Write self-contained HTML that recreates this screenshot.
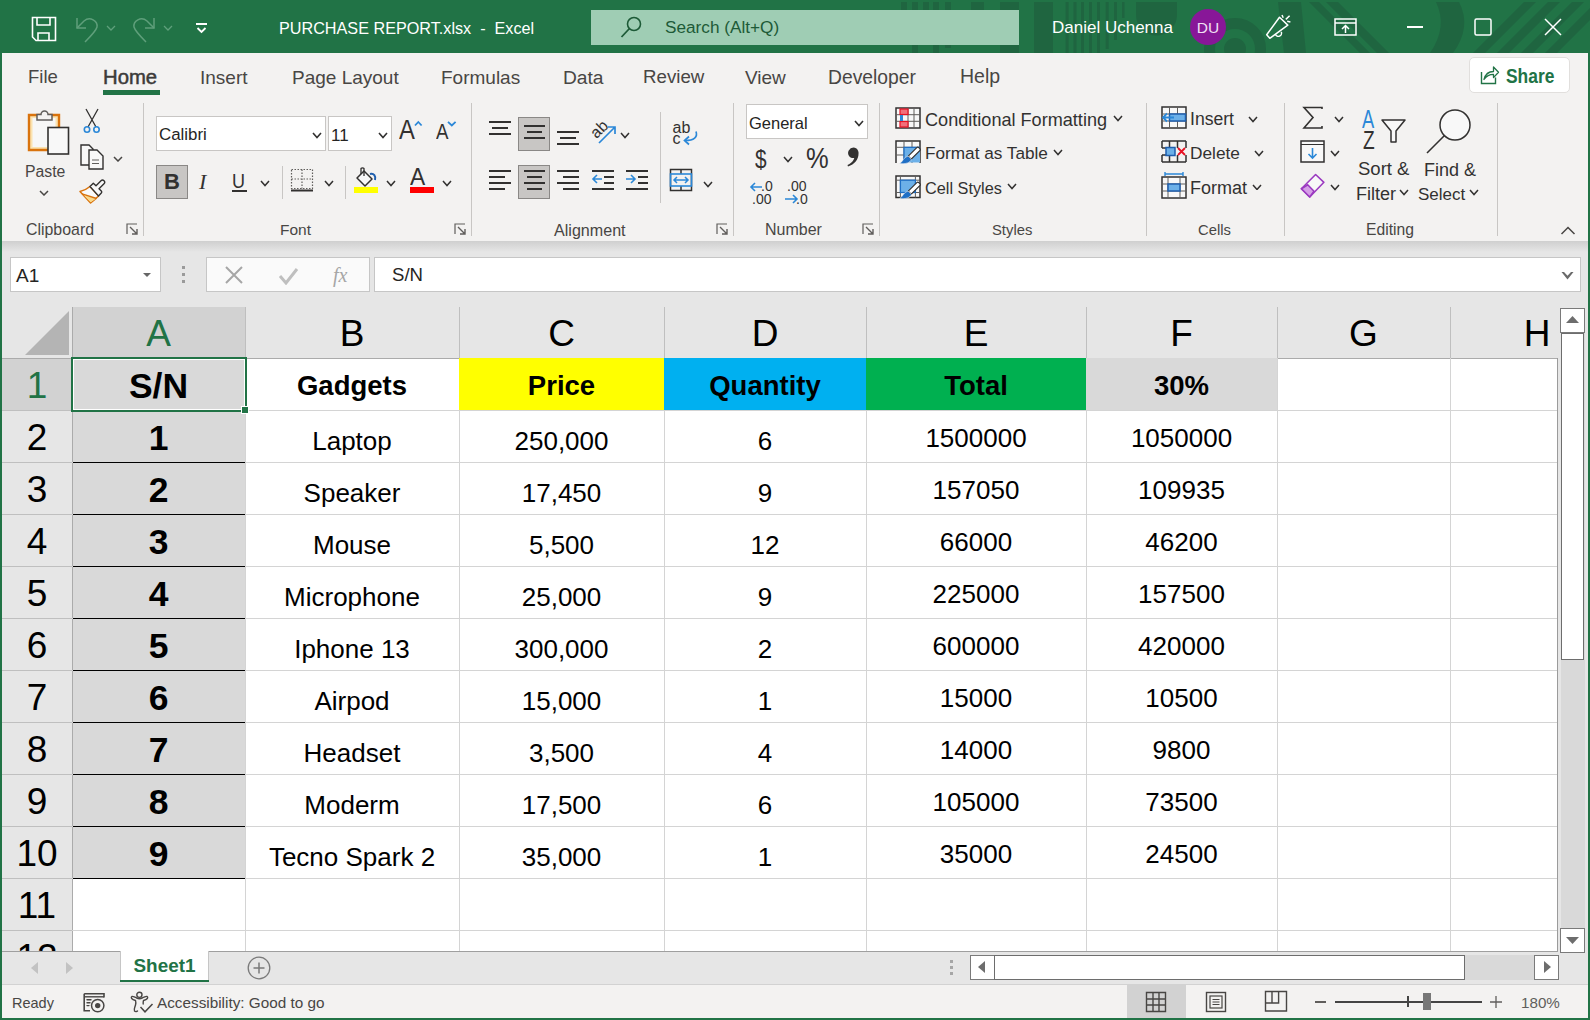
<!DOCTYPE html><html><head><meta charset="utf-8"><style>
html,body{margin:0;padding:0;}
body{width:1590px;height:1020px;overflow:hidden;position:relative;background:#217346;font-family:"Liberation Sans", sans-serif;}
.t{position:absolute;white-space:nowrap;line-height:1;}
.r{position:absolute;display:block;}
</style></head><body>
<svg class="r" style="left:880px;top:2px;" width="140" height="51" viewBox="0 0 140 51"><g transform="translate(0,-2)">
<rect x="21" y="2" width="6" height="10" fill="#1f6540"/>
<rect x="32" y="2" width="6" height="51" fill="#1f6540"/>
<rect x="43" y="2" width="6" height="10" fill="#1f6540"/>
<rect x="53" y="2" width="6" height="51" fill="#1f6540"/>
<rect x="65" y="2" width="6" height="46" fill="#1f6540"/>
<rect x="91" y="2" width="13" height="10" fill="#1f6540"/>
<rect x="120" y="2" width="19" height="51" fill="#1f6540"/>
</g></svg>
<svg class="r" style="left:1020px;top:2px;" width="570" height="51" viewBox="0 0 570 51"><g transform="translate(0,-2)">
<rect x="14" y="2" width="19" height="51" fill="#1f6540"/>
<rect x="45.6" y="2" width="3" height="51" fill="#1f6540"/>
<rect x="53.5" y="2" width="3" height="51" fill="#1f6540"/>
<rect x="61" y="2" width="3" height="51" fill="#1f6540"/>
<rect x="69" y="2" width="3" height="51" fill="#1f6540"/>
<rect x="77" y="2" width="3" height="51" fill="#1f6540"/>
<rect x="85.7" y="2" width="3" height="47" fill="#1f6540"/>
<rect x="94" y="2" width="3" height="38" fill="#1f6540"/>
<rect x="102" y="2" width="2.5" height="16" fill="#1f6540"/>
<path d="M116 2 H157 V15 A20.5 20.5 0 0 1 116 15 Z" fill="#1f6540"/>
<circle cx="215" cy="49" r="25.5" fill="none" stroke="#1f6540" stroke-width="11"/>
<circle cx="215" cy="49" r="11" fill="#1f6540"/>
<path d="M258 2 H281 L286 53 H264 Z" fill="#1f6540"/>
<path d="M289 2 H299 L350 53 H340 Z" fill="#1f6540"/>
<path d="M306 2 H318 L369 53 H357 Z" fill="#1f6540"/>
<path d="M416 2 H439 Q452 27 433 53 H410 Q428 27 416 2 Z" fill="#1f6540"/>
<path d="M453 53 H465 L516 2 H504 Z" fill="#1f6540"/>
<path d="M477 53 H489 L540 2 H528 Z" fill="#1f6540"/>
<path d="M501 53 H513 L564 2 H552 Z" fill="#1f6540"/>
<path d="M525 53 H537 L570 20 V8 Z" fill="#1f6540"/>
</g></svg>
<svg class="r" style="left:31px;top:16px;" width="27" height="27" viewBox="0 0 27 27"><path d="M1.5 1.5 H24.5 V24.5 H5 L1.5 21 Z" fill="none" stroke="#fff" stroke-width="1.6"/>
<path d="M6 1.5 V9 H19 V1.5" fill="none" stroke="#fff" stroke-width="1.6"/>
<path d="M7 24.5 V17 H18 V24.5" fill="none" stroke="#fff" stroke-width="1.6"/></svg>
<svg class="r" style="left:74px;top:15px;" width="26" height="28" viewBox="0 0 26 28"><path d="M3 3 V13 H12" fill="none" stroke="#5f9f7b" stroke-width="1.5"/><path d="M3 13 L10 6 C16 1 24 6 23 12 C22 16 17 21 11 27" fill="none" stroke="#5f9f7b" stroke-width="1.5"/></svg>
<svg class="r" style="left:106px;top:25px;" width="10" height="6" viewBox="0 0 10 6"><path d="M1 1 L5.0 5 L9 1" fill="none" stroke="#5f9f7b" stroke-width="1.3"/></svg>
<svg class="r" style="left:131px;top:15px;" width="26" height="28" viewBox="0 0 26 28"><path d="M23 3 V13 H14" fill="none" stroke="#5f9f7b" stroke-width="1.5"/><path d="M23 13 L16 6 C10 1 2 6 3 12 C4 16 9 21 15 27" fill="none" stroke="#5f9f7b" stroke-width="1.5"/></svg>
<svg class="r" style="left:163px;top:25px;" width="10" height="6" viewBox="0 0 10 6"><path d="M1 1 L5.0 5 L9 1" fill="none" stroke="#5f9f7b" stroke-width="1.3"/></svg>
<svg class="r" style="left:195px;top:21px;" width="14" height="14" viewBox="0 0 14 14"><rect x="1" y="2" width="11" height="2" fill="#fff"/><path d="M2.5 7 L6.5 11 L10.5 7" fill="none" stroke="#fff" stroke-width="1.8"/></svg>
<div class="t" style="left:279px;top:20.08px;font-size:16.2px;color:#fff;font-weight:400;">PURCHASE REPORT.xlsx&nbsp; -&nbsp; Excel</div>
<div class="r" style="left:591px;top:10px;width:428px;height:35px;background:#9fcdb4;"></div>
<svg class="r" style="left:619px;top:15px;" width="26" height="26" viewBox="0 0 26 26"><circle cx="15" cy="9" r="6.5" fill="none" stroke="#1d5a37" stroke-width="1.6"/><path d="M10.5 13.5 L2.5 22" stroke="#1d5a37" stroke-width="1.8"/></svg>
<div class="t" style="left:665px;top:18.93px;font-size:17.2px;color:#1d5a37;font-weight:400;">Search (Alt+Q)</div>
<div class="t" style="left:1052px;top:19.10px;font-size:17px;color:#fff;font-weight:400;">Daniel Uchenna</div>
<svg class="r" style="left:1190px;top:9px;" width="36" height="36" viewBox="0 0 36 36"><circle cx="18" cy="18" r="18" fill="#881798"/></svg>
<div class="t" style="left:808px;width:800px;text-align:center;top:19.87px;font-size:15.5px;color:#f0e0f4;font-weight:400;">DU</div>
<svg class="r" style="left:1264px;top:13px;" width="30" height="28" viewBox="0 0 30 28"><path d="M2.7 21.8 L5.8 25.3 L23.8 12.1 L15.5 4.2 Z" fill="none" stroke="#fff" stroke-width="1.5" stroke-linejoin="round"/>
<path d="M11.3 21.3 A3.2 3.2 0 0 0 17.3 18.9" fill="none" stroke="#fff" stroke-width="1.5"/>
<path d="M18 2 L19.2 4.8 M21.8 6.4 L25.6 2.8 M23.2 8.3 L26.4 9" stroke="#fff" stroke-width="1.5"/></svg>
<svg class="r" style="left:1334px;top:18px;" width="24" height="19" viewBox="0 0 24 19"><rect x="1" y="1" width="21" height="16" fill="none" stroke="#fff" stroke-width="1.5"/><path d="M1 5 H22" stroke="#fff" stroke-width="1.5"/><path d="M11.5 15 V8 M8 11 L11.5 7.5 L15 11" fill="none" stroke="#fff" stroke-width="1.5"/></svg>
<div class="r" style="left:1407px;top:26px;width:16px;height:1.5px;background:#fff;"></div>
<svg class="r" style="left:1474px;top:18px;" width="20" height="19" viewBox="0 0 20 19"><rect x="1" y="1" width="16" height="16" rx="1.5" fill="none" stroke="#fff" stroke-width="1.5"/></svg>
<svg class="r" style="left:1543px;top:17px;" width="20" height="20" viewBox="0 0 20 20"><path d="M2 2 L18 18 M18 2 L2 18" stroke="#fff" stroke-width="1.5"/></svg>
<div class="r" style="left:2px;top:53px;width:1586px;height:188px;background:#f3f2f1;"></div>
<div class="t" style="left:28px;top:68.33px;font-size:18.5px;color:#484644;font-weight:400;">File</div>
<div class="t" style="left:103px;top:66.81px;font-size:20.3px;color:#3b3a39;font-weight:400;-webkit-text-stroke:0.5px #3b3a39;">Home</div>
<div class="t" style="left:200px;top:67.91px;font-size:19px;color:#484644;font-weight:400;">Insert</div>
<div class="t" style="left:292px;top:67.91px;font-size:19px;color:#484644;font-weight:400;">Page Layout</div>
<div class="t" style="left:441px;top:67.91px;font-size:19px;color:#484644;font-weight:400;">Formulas</div>
<div class="t" style="left:563px;top:67.74px;font-size:19.2px;color:#484644;font-weight:400;">Data</div>
<div class="t" style="left:643px;top:68.16px;font-size:18.7px;color:#484644;font-weight:400;">Review</div>
<div class="t" style="left:745px;top:67.91px;font-size:19px;color:#484644;font-weight:400;">View</div>
<div class="t" style="left:828px;top:67.65px;font-size:19.3px;color:#484644;font-weight:400;">Developer</div>
<div class="t" style="left:960px;top:67.48px;font-size:19.5px;color:#484644;font-weight:400;">Help</div>
<div class="r" style="left:103px;top:90px;width:57px;height:5px;background:#217346;"></div>
<div class="r" style="left:1469px;top:57px;width:101px;height:36px;background:#fff;border:1px solid #e1dfdd;border-radius:5px;box-sizing:border-box;"></div>
<svg class="r" style="left:1479px;top:64px;" width="22" height="22" viewBox="0 0 22 22"><path d="M2.5 8 V19.5 H16.5 V13.5" fill="none" stroke="#217346" stroke-width="1.4"/><path d="M5 15.5 C6.5 9.5 11 7.5 14.5 7.5 V3 L19.5 8.3 L14.5 13.6 V10.3 C10.5 10.3 7.5 11.8 5 15.5 Z" fill="none" stroke="#217346" stroke-width="1.3" stroke-linejoin="round"/></svg>
<div class="t" style="left:1505.5px;top:67.23px;font-size:19.8px;color:#217346;font-weight:700;transform:scaleX(0.88);transform-origin:left;">Share</div>
<div class="r" style="left:143px;top:103px;width:1px;height:133px;background:#c8c6c4;"></div>
<div class="r" style="left:471px;top:103px;width:1px;height:133px;background:#c8c6c4;"></div>
<div class="r" style="left:733px;top:103px;width:1px;height:133px;background:#c8c6c4;"></div>
<div class="r" style="left:879px;top:103px;width:1px;height:133px;background:#c8c6c4;"></div>
<div class="r" style="left:1146px;top:103px;width:1px;height:133px;background:#c8c6c4;"></div>
<div class="r" style="left:1284px;top:103px;width:1px;height:133px;background:#c8c6c4;"></div>
<div class="r" style="left:1497px;top:103px;width:1px;height:133px;background:#c8c6c4;"></div>
<div class="t" style="left:26px;top:222.13px;font-size:15.9px;color:#484644;font-weight:400;">Clipboard</div>
<div class="t" style="left:280px;top:222.47px;font-size:15.5px;color:#484644;font-weight:400;">Font</div>
<div class="t" style="left:554px;top:221.96px;font-size:16.1px;color:#484644;font-weight:400;">Alignment</div>
<div class="t" style="left:765px;top:222.05px;font-size:16px;color:#484644;font-weight:400;">Number</div>
<div class="t" style="left:992px;top:223.06px;font-size:14.8px;color:#484644;font-weight:400;">Styles</div>
<div class="t" style="left:1198px;top:223.06px;font-size:14.8px;color:#484644;font-weight:400;">Cells</div>
<div class="t" style="left:1366px;top:222.30px;font-size:15.7px;color:#484644;font-weight:400;">Editing</div>
<svg class="r" style="left:126px;top:223px;" width="13" height="13" viewBox="0 0 13 13"><path d="M1 11 V1 H11" fill="none" stroke="#605e5c" stroke-width="1.2"/><path d="M4 4 L11 11 M6 11 H11 V6" fill="none" stroke="#605e5c" stroke-width="1.4"/></svg>
<svg class="r" style="left:454px;top:223px;" width="13" height="13" viewBox="0 0 13 13"><path d="M1 11 V1 H11" fill="none" stroke="#605e5c" stroke-width="1.2"/><path d="M4 4 L11 11 M6 11 H11 V6" fill="none" stroke="#605e5c" stroke-width="1.4"/></svg>
<svg class="r" style="left:716px;top:223px;" width="13" height="13" viewBox="0 0 13 13"><path d="M1 11 V1 H11" fill="none" stroke="#605e5c" stroke-width="1.2"/><path d="M4 4 L11 11 M6 11 H11 V6" fill="none" stroke="#605e5c" stroke-width="1.4"/></svg>
<svg class="r" style="left:862px;top:223px;" width="13" height="13" viewBox="0 0 13 13"><path d="M1 11 V1 H11" fill="none" stroke="#605e5c" stroke-width="1.2"/><path d="M4 4 L11 11 M6 11 H11 V6" fill="none" stroke="#605e5c" stroke-width="1.4"/></svg>
<svg class="r" style="left:1560px;top:225px;" width="16" height="11" viewBox="0 0 16 11"><path d="M1.5 9 L8 2.5 L14.5 9" fill="none" stroke="#484644" stroke-width="1.5"/></svg>
<svg class="r" style="left:27px;top:107px;" width="44" height="50" viewBox="0 0 44 50"><path d="M2 8 H32 V43 H2 Z" fill="#fbe3b0" stroke="#d9730d" stroke-width="2.4"/>
<rect x="5.5" y="11" width="23" height="29" fill="#f7f7f7"/>
<path d="M10 13 V7.5 H14 A3.5 3.5 0 0 1 21 7.5 H25 V13 Z" fill="#f3f2f1" stroke="#605e5c" stroke-width="1.5"/>
<rect x="21" y="20.5" width="20.5" height="26.5" fill="#f8f8f8" stroke="#323130" stroke-width="1.6"/></svg>
<div class="t" style="left:25px;top:163.62px;font-size:15.8px;color:#484644;font-weight:400;">Paste</div>
<svg class="r" style="left:39px;top:190px;" width="10" height="6" viewBox="0 0 10 6"><path d="M1 1 L5.0 5 L9 1" fill="none" stroke="#484644" stroke-width="1.5"/></svg>
<svg class="r" style="left:82px;top:108px;" width="20" height="27" viewBox="0 0 20 27"><path d="M4 1 L14 19 M16 1 L6 19" stroke="#323130" stroke-width="1.3"/>
<circle cx="5" cy="21.5" r="2.7" fill="none" stroke="#2b88d8" stroke-width="1.6"/>
<circle cx="14.5" cy="21.5" r="2.7" fill="none" stroke="#2b88d8" stroke-width="1.6"/></svg>
<svg class="r" style="left:79px;top:144px;" width="27" height="27" viewBox="0 0 27 27"><path d="M2 1 H10 L14 5 V21 H2 Z" fill="#f8f8f8" stroke="#323130" stroke-width="1.4"/>
<path d="M10 6 H18 L24 12 V25 H10 Z" fill="#f8f8f8" stroke="#323130" stroke-width="1.4"/>
<path d="M13 16 H20 M13 19.5 H20" stroke="#605e5c" stroke-width="1.2"/></svg>
<svg class="r" style="left:113px;top:156px;" width="10" height="6" viewBox="0 0 10 6"><path d="M1 1 L5.0 5 L9 1" fill="none" stroke="#484644" stroke-width="1.5"/></svg>
<svg class="r" style="left:74px;top:174px;" width="34" height="34" viewBox="0 0 34 34"><path d="M16 12.5 Q12 16 6 17.4 L16.6 29 Q21 25.5 24.5 21.9 Z" fill="#fafafa" stroke="#d9730d" stroke-width="1.5" stroke-linejoin="round"/>
<path d="M9.5 21 L22 24.7 L16.6 28.3 Z" fill="#f8d98a"/>
<path d="M8 19.8 L22.5 24.5" stroke="#d9730d" stroke-width="1.4"/>
<path d="M16 12.5 L19.3 9.2 L22 11.8 L27 6.8 Q28.5 5.3 30 6.8 Q31.5 8.3 30 9.8 L25 14.8 L27.3 17.1 Q28.3 18.1 27.3 19.1 L24.5 21.9 Z" fill="#f8f8f8" stroke="#323130" stroke-width="1.4" stroke-linejoin="round"/></svg>
<div class="r" style="left:156px;top:116px;width:170px;height:35px;background:#fff;border:1px solid #c8c6c4;box-sizing:border-box;"></div>
<div class="t" style="left:159px;top:126.69px;font-size:16.9px;color:#252423;font-weight:400;">Calibri</div>
<svg class="r" style="left:312px;top:132px;" width="10" height="6.5" viewBox="0 0 10 6.5"><path d="M1 1 L5.0 5.5 L9 1" fill="none" stroke="#323130" stroke-width="1.6"/></svg>
<div class="r" style="left:328px;top:116px;width:64px;height:35px;background:#fff;border:1px solid #c8c6c4;box-sizing:border-box;"></div>
<div class="t" style="left:331px;top:126.60px;font-size:17px;color:#252423;font-weight:400;">11</div>
<svg class="r" style="left:378px;top:132px;" width="10" height="6.5" viewBox="0 0 10 6.5"><path d="M1 1 L5.0 5.5 L9 1" fill="none" stroke="#323130" stroke-width="1.6"/></svg>
<div class="t" style="left:399px;top:116.28px;font-size:28px;color:#323130;font-weight:400;transform:scaleX(0.85);transform-origin:left;">A</div>
<svg class="r" style="left:414px;top:120px;" width="9" height="7" viewBox="0 0 9 7"><path d="M1 5.5 L4.3 2 L7.6 5.5" fill="none" stroke="#2b88d8" stroke-width="1.8"/></svg>
<div class="t" style="left:436px;top:121.37px;font-size:22px;color:#323130;font-weight:400;transform:scaleX(0.85);transform-origin:left;">A</div>
<svg class="r" style="left:447px;top:120px;" width="10" height="7" viewBox="0 0 10 7"><path d="M1 1.8 L4.8 5.5 L8.6 1.8" fill="none" stroke="#2b88d8" stroke-width="1.8"/></svg>
<div class="r" style="left:156px;top:165px;width:32px;height:34px;background:#c8c6c4;border:1px solid #8a8886;box-sizing:border-box;"></div>
<div class="t" style="left:164px;top:171.37px;font-size:22px;color:#323130;font-weight:700;">B</div>
<div class="t" style="left:199px;top:171.37px;font-size:22px;color:#323130;font-weight:400;font-family:'Liberation Serif',serif;font-style:italic;">I</div>
<div class="t" style="left:232px;top:171.06px;font-size:20px;color:#323130;font-weight:400;transform:scaleX(0.9);transform-origin:left;">U</div>
<div class="r" style="left:232px;top:190px;width:15px;height:1.5px;background:#323130;"></div>
<svg class="r" style="left:260px;top:180px;" width="10" height="6.5" viewBox="0 0 10 6.5"><path d="M1 1 L5.0 5.5 L9 1" fill="none" stroke="#323130" stroke-width="1.5"/></svg>
<div class="r" style="left:282px;top:166px;width:1px;height:33px;background:#c8c6c4;"></div>
<svg class="r" style="left:290px;top:168px;" width="24" height="25" viewBox="0 0 24 25"><path d="M1.5 1.5 H22.5 V20.5 H1.5 Z M12 1.5 V20.5 M1.5 11 H22.5" fill="none" stroke="#605e5c" stroke-width="1.2" stroke-dasharray="1.5 1.5"/>
<path d="M1 22.5 H23" stroke="#323130" stroke-width="2"/></svg>
<svg class="r" style="left:324px;top:180px;" width="10" height="6.5" viewBox="0 0 10 6.5"><path d="M1 1 L5.0 5.5 L9 1" fill="none" stroke="#323130" stroke-width="1.5"/></svg>
<div class="r" style="left:345px;top:166px;width:1px;height:33px;background:#c8c6c4;"></div>
<svg class="r" style="left:353px;top:167px;" width="27" height="28" viewBox="0 0 27 28"><path d="M4 11 L11 4 L19 12 L12 19 Z" fill="#f8f8f8" stroke="#323130" stroke-width="1.5" stroke-linejoin="round"/>
<path d="M8 7 V1.5 A2 2 0 0 1 11 1.5 V9" fill="none" stroke="#323130" stroke-width="1.3"/>
<path d="M17 7 C21 6 23 9 22 13" fill="none" stroke="#1f5fae" stroke-width="2"/>
<rect x="1" y="20" width="24" height="6" fill="#ffff00"/></svg>
<svg class="r" style="left:386px;top:180px;" width="10" height="6.5" viewBox="0 0 10 6.5"><path d="M1 1 L5.0 5.5 L9 1" fill="none" stroke="#323130" stroke-width="1.5"/></svg>
<div class="t" style="left:410px;top:164.67px;font-size:24px;color:#323130;font-weight:400;transform:scaleX(0.95);transform-origin:left;">A</div>
<div class="r" style="left:410px;top:187px;width:24px;height:6px;background:#ff0000;"></div>
<svg class="r" style="left:442px;top:180px;" width="10" height="6.5" viewBox="0 0 10 6.5"><path d="M1 1 L5.0 5.5 L9 1" fill="none" stroke="#323130" stroke-width="1.5"/></svg>
<div class="r" style="left:489px;top:121px;width:22px;height:1.6px;background:#323130;"></div>
<div class="r" style="left:492px;top:127px;width:16px;height:1.6px;background:#323130;"></div>
<div class="r" style="left:489px;top:133px;width:22px;height:1.6px;background:#323130;"></div>
<div class="r" style="left:518px;top:117px;width:32px;height:34px;background:#c8c6c4;border:1px solid #8a8886;box-sizing:border-box;"></div>
<div class="r" style="left:524px;top:125px;width:21px;height:1.6px;background:#323130;"></div>
<div class="r" style="left:527px;top:131px;width:15px;height:1.6px;background:#323130;"></div>
<div class="r" style="left:524px;top:137px;width:21px;height:1.6px;background:#323130;"></div>
<div class="r" style="left:557px;top:131px;width:22px;height:1.6px;background:#323130;"></div>
<div class="r" style="left:560px;top:137px;width:16px;height:1.6px;background:#323130;"></div>
<div class="r" style="left:557px;top:143px;width:22px;height:1.6px;background:#323130;"></div>
<svg class="r" style="left:587px;top:117px;" width="32" height="30" viewBox="0 0 32 30"><text x="12" y="17.5" text-anchor="middle" font-family="Liberation Sans" font-size="16" fill="#323130" transform="rotate(-45 12 12)">ab</text>
<path d="M12 26 L28 10 M21 10 H28 V17" fill="none" stroke="#2b88d8" stroke-width="1.7"/></svg>
<svg class="r" style="left:620px;top:132px;" width="10" height="6.5" viewBox="0 0 10 6.5"><path d="M1 1 L5.0 5.5 L9 1" fill="none" stroke="#323130" stroke-width="1.5"/></svg>
<div class="r" style="left:489px;top:170px;width:22px;height:1.6px;background:#323130;"></div>
<div class="r" style="left:489px;top:176px;width:16px;height:1.6px;background:#323130;"></div>
<div class="r" style="left:489px;top:182px;width:22px;height:1.6px;background:#323130;"></div>
<div class="r" style="left:489px;top:188px;width:16px;height:1.6px;background:#323130;"></div>
<div class="r" style="left:518px;top:165px;width:32px;height:34px;background:#c8c6c4;border:1px solid #8a8886;box-sizing:border-box;"></div>
<div class="r" style="left:524px;top:170px;width:21px;height:1.6px;background:#323130;"></div>
<div class="r" style="left:527px;top:176px;width:15px;height:1.6px;background:#323130;"></div>
<div class="r" style="left:524px;top:182px;width:21px;height:1.6px;background:#323130;"></div>
<div class="r" style="left:527px;top:188px;width:15px;height:1.6px;background:#323130;"></div>
<div class="r" style="left:557px;top:170px;width:22px;height:1.6px;background:#323130;"></div>
<div class="r" style="left:563px;top:176px;width:16px;height:1.6px;background:#323130;"></div>
<div class="r" style="left:557px;top:182px;width:22px;height:1.6px;background:#323130;"></div>
<div class="r" style="left:563px;top:188px;width:16px;height:1.6px;background:#323130;"></div>
<div class="r" style="left:592px;top:170px;width:22px;height:1.6px;background:#323130;"></div>
<div class="r" style="left:592px;top:188px;width:22px;height:1.6px;background:#323130;"></div>
<div class="r" style="left:604px;top:176px;width:10px;height:1.6px;background:#323130;"></div>
<div class="r" style="left:604px;top:182px;width:10px;height:1.6px;background:#323130;"></div>
<svg class="r" style="left:591px;top:173px;" width="12" height="12" viewBox="0 0 12 12"><path d="M11 6 H2 M6 2 L2 6 L6 10" fill="none" stroke="#2b88d8" stroke-width="1.6"/></svg>
<div class="r" style="left:626px;top:170px;width:22px;height:1.6px;background:#323130;"></div>
<div class="r" style="left:626px;top:188px;width:22px;height:1.6px;background:#323130;"></div>
<div class="r" style="left:638px;top:176px;width:10px;height:1.6px;background:#323130;"></div>
<div class="r" style="left:638px;top:182px;width:10px;height:1.6px;background:#323130;"></div>
<svg class="r" style="left:625px;top:173px;" width="12" height="12" viewBox="0 0 12 12"><path d="M1 6 H10 M6 2 L10 6 L6 10" fill="none" stroke="#2b88d8" stroke-width="1.6"/></svg>
<div class="r" style="left:660px;top:112px;width:1px;height:91px;background:#c8c6c4;"></div>
<svg class="r" style="left:671px;top:118px;" width="28" height="30" viewBox="0 0 28 30"><text x="1.5" y="15" font-family="Liberation Sans" font-size="16" fill="#323130">ab</text>
<text x="1.5" y="25.5" font-family="Liberation Sans" font-size="16" fill="#323130">c</text>
<path d="M25 13.5 C27 19 23 22.5 14 22.5" fill="none" stroke="#2b88d8" stroke-width="1.7"/>
<path d="M18 18.5 L13.5 22.5 L18 26.5" fill="none" stroke="#2b88d8" stroke-width="1.7"/></svg>
<svg class="r" style="left:669px;top:168px;" width="25" height="25" viewBox="0 0 25 25"><rect x="1.5" y="1.5" width="21" height="21" fill="none" stroke="#323130" stroke-width="1.5"/>
<path d="M12 1.5 V6 M12 18 V22.5" stroke="#323130" stroke-width="1.5"/>
<rect x="1.5" y="6" width="21" height="12" fill="none" stroke="#2b88d8" stroke-width="1.6"/>
<path d="M5 12 H19 M8 9 L5 12 L8 15 M16 9 L19 12 L16 15" fill="none" stroke="#2b88d8" stroke-width="1.5"/></svg>
<svg class="r" style="left:703px;top:181px;" width="10" height="6.5" viewBox="0 0 10 6.5"><path d="M1 1 L5.0 5.5 L9 1" fill="none" stroke="#323130" stroke-width="1.5"/></svg>
<div class="r" style="left:746px;top:104px;width:122px;height:35px;background:#fff;border:1px solid #c8c6c4;box-sizing:border-box;"></div>
<div class="t" style="left:749px;top:115.02px;font-size:16.5px;color:#252423;font-weight:400;">General</div>
<svg class="r" style="left:854px;top:120px;" width="10" height="6.5" viewBox="0 0 10 6.5"><path d="M1 1 L5.0 5.5 L9 1" fill="none" stroke="#323130" stroke-width="1.6"/></svg>
<div class="t" style="left:755px;top:145.98px;font-size:26px;color:#323130;font-weight:400;transform:scaleX(0.8);transform-origin:left;">$</div>
<svg class="r" style="left:783px;top:156px;" width="10" height="6.5" viewBox="0 0 10 6.5"><path d="M1 1 L5.0 5.5 L9 1" fill="none" stroke="#323130" stroke-width="1.5"/></svg>
<div class="t" style="left:806px;top:143.09px;font-size:30px;color:#323130;font-weight:400;transform:scaleX(0.85);transform-origin:left;">%</div>
<svg class="r" style="left:845px;top:146px;" width="16" height="22" viewBox="0 0 16 22"><path d="M8.5 1.5 A5.3 5.3 0 1 1 4 10 A5.5 5.5 0 0 1 8.5 1.5 Z M13.5 6.5 C14 13 10 18.5 3 20.5 L2.5 19 C7 17 9.5 14 9.5 10 Z" fill="#323130"/></svg>
<svg class="r" style="left:749px;top:178px;" width="60" height="28" viewBox="0 0 60 28"><path d="M13 9 H2 M6 5 L2 9 L6 13" fill="none" stroke="#2b88d8" stroke-width="1.6"/>
<path d="M48 21 H36 M44 17 L48 21 L44 25" fill="none" stroke="#2b88d8" stroke-width="1.6"/></svg>
<div class="t" style="left:761px;top:179.14px;font-size:14px;color:#323130;font-weight:400;">.0</div>
<div class="t" style="left:752px;top:192.14px;font-size:14px;color:#323130;font-weight:400;">.00</div>
<div class="t" style="left:787px;top:179.14px;font-size:14px;color:#323130;font-weight:400;">.00</div>
<div class="t" style="left:796px;top:192.14px;font-size:14px;color:#323130;font-weight:400;">.0</div>
<svg class="r" style="left:895px;top:107px;" width="26" height="23" viewBox="0 0 26 23"><rect x="1" y="1" width="24" height="20" fill="#f8f8f8" stroke="#323130" stroke-width="1.5"/>
<path d="M7 1 V21 M13 1 V21 M19 1 V21 M1 7.7 H25 M1 14.3 H25" stroke="#605e5c" stroke-width="1"/>
<rect x="5" y="2" width="8" height="5.5" fill="#f1707b" stroke="#e81123" stroke-width="1.2"/>
<rect x="5" y="14.5" width="8" height="5.5" fill="#f1707b" stroke="#e81123" stroke-width="1.2"/>
<rect x="5" y="8" width="3" height="6" fill="#2b88d8"/></svg>
<div class="t" style="left:925px;top:110.67px;font-size:18.1px;color:#323130;font-weight:400;">Conditional Formatting</div>
<svg class="r" style="left:1113px;top:115px;" width="10" height="6.5" viewBox="0 0 10 6.5"><path d="M1 1 L5.0 5.5 L9 1" fill="none" stroke="#323130" stroke-width="1.5"/></svg>
<svg class="r" style="left:895px;top:140px;" width="26" height="25" viewBox="0 0 26 25"><path d="M1 23 V1 H25 V23" fill="#f8f8f8" stroke="#323130" stroke-width="1.5"/>
<path d="M9 1 V23 M17 1 V23 M1 7.3 H25 M1 15 H25" stroke="#605e5c" stroke-width="1"/>
<rect x="9" y="7.3" width="16" height="15.2" fill="#6cb0e8"/>
<path d="M9 22.5 V7.3 H25" fill="none" stroke="#1f6fc5" stroke-width="1.3"/>
<path d="M24.8 8.6 Q25.8 9.6 24.8 10.6 L16.2 19.2 L13.2 16.2 L21.8 7.6 Q22.8 6.6 23.8 7.6 Z" fill="#fff" stroke="#323130" stroke-width="1.2"/>
<path d="M13 16 L16.4 19.4 C15.4 22.6 11 24.2 4.5 23.6 C7.8 22 8.6 17 13 16 Z" fill="#1f6fc5" stroke="#f3f2f1" stroke-width="0.6"/></svg>
<div class="t" style="left:925px;top:145.43px;font-size:17.2px;color:#323130;font-weight:400;">Format as Table</div>
<svg class="r" style="left:1053px;top:149px;" width="10" height="6.5" viewBox="0 0 10 6.5"><path d="M1 1 L5.0 5.5 L9 1" fill="none" stroke="#323130" stroke-width="1.5"/></svg>
<svg class="r" style="left:895px;top:175px;" width="26" height="25" viewBox="0 0 26 25"><rect x="1" y="1" width="24" height="21.5" fill="#f8f8f8" stroke="#323130" stroke-width="1.5"/>
<path d="M5.4 1 V22.5 M20.4 1 V22.5 M1 5.2 H25 M1 17.5 H25" stroke="#605e5c" stroke-width="1"/>
<rect x="5.4" y="5.2" width="15" height="12.3" fill="#6cb0e8" stroke="#1f6fc5" stroke-width="1.3"/>
<path d="M24.8 8.6 Q25.8 9.6 24.8 10.6 L16.2 19.2 L13.2 16.2 L21.8 7.6 Q22.8 6.6 23.8 7.6 Z" fill="#fff" stroke="#323130" stroke-width="1.2"/>
<path d="M13 16 L16.4 19.4 C15.4 22.6 11 24.2 4.5 23.6 C7.8 22 8.6 17 13 16 Z" fill="#1f6fc5" stroke="#f3f2f1" stroke-width="0.6"/></svg>
<div class="t" style="left:925px;top:180.19px;font-size:16.3px;color:#323130;font-weight:400;">Cell Styles</div>
<svg class="r" style="left:1007px;top:183px;" width="10" height="6.5" viewBox="0 0 10 6.5"><path d="M1 1 L5.0 5.5 L9 1" fill="none" stroke="#323130" stroke-width="1.5"/></svg>
<svg class="r" style="left:1161px;top:106px;" width="26" height="24" viewBox="0 0 26 24"><rect x="1" y="1" width="24" height="21" fill="#f8f8f8" stroke="#323130" stroke-width="1.5"/>
<path d="M8.5 1 V22 M16.5 1 V22 M1 8 H25 M1 15 H25" stroke="#605e5c" stroke-width="1"/>
<rect x="8.5" y="8" width="16" height="7" fill="#6cb0e8" stroke="#1f5fae" stroke-width="1.5"/>
<path d="M13 11.5 H2 M6 7.5 L2 11.5 L6 15.5" fill="none" stroke="#2b88d8" stroke-width="1.8"/></svg>
<div class="t" style="left:1190px;top:111.09px;font-size:17.6px;color:#323130;font-weight:400;">Insert</div>
<svg class="r" style="left:1248px;top:116px;" width="10" height="6.5" viewBox="0 0 10 6.5"><path d="M1 1 L5.0 5.5 L9 1" fill="none" stroke="#323130" stroke-width="1.5"/></svg>
<svg class="r" style="left:1161px;top:140px;" width="26" height="24" viewBox="0 0 26 24"><path d="M1 1 H25 M1 22 H25 M1 1 V8 M1 15 V22 M25 1 V8 M25 15 V22 M8.5 1 V8 M16.5 1 V8 M8.5 15 V22 M16.5 15 V22 M1 8 H6 M1 15 H6" fill="none" stroke="#323130" stroke-width="1.5"/>
<rect x="5" y="7.5" width="9" height="8" fill="#6cb0e8" stroke="#1f5fae" stroke-width="1.5"/>
<path d="M17 8 L24 15 M24 8 L17 15" stroke="#e81123" stroke-width="1.8"/></svg>
<div class="t" style="left:1190px;top:145.35px;font-size:17.3px;color:#323130;font-weight:400;">Delete</div>
<svg class="r" style="left:1254px;top:150px;" width="10" height="6.5" viewBox="0 0 10 6.5"><path d="M1 1 L5.0 5.5 L9 1" fill="none" stroke="#323130" stroke-width="1.5"/></svg>
<svg class="r" style="left:1161px;top:172px;" width="26" height="28" viewBox="0 0 26 28"><rect x="1" y="5" width="24" height="21" fill="#f8f8f8" stroke="#323130" stroke-width="1.5"/>
<path d="M7 5 V26 M19 5 V26 M1 12 H25 M1 19 H25" stroke="#605e5c" stroke-width="1"/>
<rect x="7" y="12" width="12" height="7" fill="#6cb0e8" stroke="#1f5fae" stroke-width="1.5"/>
<path d="M4 2 H22 M4 0 V4 M22 0 V4" stroke="#2b88d8" stroke-width="1.4"/></svg>
<div class="t" style="left:1190px;top:178.75px;font-size:18px;color:#323130;font-weight:400;">Format</div>
<svg class="r" style="left:1252px;top:183.5px;" width="10" height="6.5" viewBox="0 0 10 6.5"><path d="M1 1 L5.0 5.5 L9 1" fill="none" stroke="#323130" stroke-width="1.5"/></svg>
<svg class="r" style="left:1302px;top:106px;" width="22" height="24" viewBox="0 0 22 24"><path d="M20 3 V1.5 H2 L11 11.5 L2 22 H20 V20" fill="none" stroke="#323130" stroke-width="1.6"/></svg>
<svg class="r" style="left:1334px;top:116px;" width="10" height="6.5" viewBox="0 0 10 6.5"><path d="M1 1 L5.0 5.5 L9 1" fill="none" stroke="#323130" stroke-width="1.5"/></svg>
<svg class="r" style="left:1300px;top:140px;" width="26" height="25" viewBox="0 0 26 25"><rect x="1" y="1" width="23" height="21" fill="#f8f8f8" stroke="#323130" stroke-width="1.5"/>
<path d="M1 4.5 H24" stroke="#323130" stroke-width="1"/>
<path d="M12.5 8 V18 M8.5 14 L12.5 18 L16.5 14" fill="none" stroke="#2b88d8" stroke-width="1.6"/></svg>
<svg class="r" style="left:1330px;top:150px;" width="10" height="6.5" viewBox="0 0 10 6.5"><path d="M1 1 L5.0 5.5 L9 1" fill="none" stroke="#323130" stroke-width="1.5"/></svg>
<svg class="r" style="left:1300px;top:173px;" width="26" height="26" viewBox="0 0 26 26"><path d="M1.4 15.8 L9.7 24 L23.9 9.3 L15.6 1.5 Z" fill="#f8f8f8" stroke="#9b3ac0" stroke-width="1.6" stroke-linejoin="round"/>
<path d="M1.4 15.8 L9.7 24 L14 18.2 L7.7 11.8 Z" fill="#d59ee7" stroke="#9b3ac0" stroke-width="1.6" stroke-linejoin="round"/></svg>
<svg class="r" style="left:1330px;top:184px;" width="10" height="6.5" viewBox="0 0 10 6.5"><path d="M1 1 L5.0 5.5 L9 1" fill="none" stroke="#323130" stroke-width="1.5"/></svg>
<div class="t" style="left:1362px;top:106.90px;font-size:25.5px;color:#2b88d8;font-weight:400;transform:scaleX(0.72);transform-origin:left;">A</div>
<div class="t" style="left:1362.5px;top:127.90px;font-size:25.5px;color:#323130;font-weight:400;transform:scaleX(0.75);transform-origin:left;">Z</div>
<svg class="r" style="left:1380px;top:118px;" width="27" height="27" viewBox="0 0 27 27"><path d="M2 2 H25 L16 13 V24 H11 V13 Z" fill="#f8f8f8" stroke="#323130" stroke-width="1.5" stroke-linejoin="round"/></svg>
<div class="t" style="left:1358px;top:160.33px;font-size:18.5px;color:#323130;font-weight:400;">Sort &amp;</div>
<div class="t" style="left:1356px;top:185.25px;font-size:18px;color:#323130;font-weight:400;">Filter</div>
<svg class="r" style="left:1399px;top:189px;" width="10" height="6.5" viewBox="0 0 10 6.5"><path d="M1 1 L5.0 5.5 L9 1" fill="none" stroke="#323130" stroke-width="1.5"/></svg>
<svg class="r" style="left:1425px;top:108px;" width="48" height="47" viewBox="0 0 48 47"><circle cx="30" cy="17" r="15" fill="#f8f8f8" stroke="#323130" stroke-width="1.5"/><path d="M19.5 27.5 L2 45" stroke="#323130" stroke-width="1.6"/></svg>
<div class="t" style="left:1424px;top:160.75px;font-size:18px;color:#323130;font-weight:400;">Find &amp;</div>
<div class="t" style="left:1418px;top:186.10px;font-size:17px;color:#323130;font-weight:400;">Select</div>
<svg class="r" style="left:1469px;top:189px;" width="10" height="6.5" viewBox="0 0 10 6.5"><path d="M1 1 L5.0 5.5 L9 1" fill="none" stroke="#323130" stroke-width="1.5"/></svg>
<div class="r" style="left:2px;top:241px;width:1586px;height:66px;background:#e6e6e6;"></div>
<div class="r" style="left:2px;top:241px;width:1586px;height:11px;background:linear-gradient(#cfcfcf,#e6e6e6);"></div>
<div class="r" style="left:10px;top:257px;width:151px;height:35px;background:#fff;border:1px solid #c6c6c6;box-sizing:border-box;"></div>
<div class="t" style="left:16px;top:265.91px;font-size:19px;color:#252423;font-weight:400;">A1</div>
<svg class="r" style="left:142px;top:272px;" width="10" height="6" viewBox="0 0 10 6"><path d="M1 1 H9 L5 5 Z" fill="#666"/></svg>
<div class="r" style="left:182px;top:266px;width:3px;height:3px;background:#9a9a9a;"></div>
<div class="r" style="left:182px;top:273px;width:3px;height:3px;background:#9a9a9a;"></div>
<div class="r" style="left:182px;top:280px;width:3px;height:3px;background:#9a9a9a;"></div>
<div class="r" style="left:206px;top:257px;width:164px;height:35px;background:#fafafa;border:1px solid #c6c6c6;box-sizing:border-box;"></div>
<svg class="r" style="left:224px;top:265px;" width="20" height="20" viewBox="0 0 20 20"><path d="M2 2 L18 18 M18 2 L2 18" stroke="#a6a6a6" stroke-width="2"/></svg>
<svg class="r" style="left:278px;top:266px;" width="21" height="19" viewBox="0 0 21 19"><path d="M2 10 L8 17 L19 3" fill="none" stroke="#bfbfbf" stroke-width="3"/></svg>
<div class="t" style="left:333px;top:265.06px;font-size:20px;color:#a6a6a6;font-weight:400;font-family:'Liberation Serif',serif;font-style:italic;">fx</div>
<div class="r" style="left:374px;top:257px;width:1207px;height:35px;background:#fff;border:1px solid #c6c6c6;box-sizing:border-box;"></div>
<div class="t" style="left:392px;top:266.25px;font-size:18.6px;color:#252423;font-weight:400;">S/N</div>
<svg class="r" style="left:1561px;top:271px;" width="13" height="10" viewBox="0 0 13 10"><path d="M0.5 1 L3 1 L6.5 4.8 L10 1 L12.5 1 L6.5 8.5 Z" fill="#6a6a6a"/></svg>
<div class="r" style="left:72px;top:358px;width:1486px;height:593px;background:#fff;"></div>
<div class="r" style="left:2px;top:307px;width:1556px;height:51px;background:#e6e6e6;"></div>
<div class="r" style="left:72px;top:307px;width:173px;height:51px;background:#d2d2d2;"></div>
<div class="r" style="left:2px;top:358px;width:70px;height:593px;background:#e6e6e6;"></div>
<div class="r" style="left:2px;top:358px;width:70px;height:52px;background:#d2d2d2;"></div>
<svg class="r" style="left:25px;top:311px;" width="45" height="45" viewBox="0 0 45 45"><path d="M44 0 V44 H0 Z" fill="#b4b4b4"/></svg>
<div class="r" style="left:245px;top:307px;width:1px;height:51px;background:#bfbfbf;"></div>
<div class="r" style="left:459px;top:307px;width:1px;height:51px;background:#bfbfbf;"></div>
<div class="r" style="left:664px;top:307px;width:1px;height:51px;background:#bfbfbf;"></div>
<div class="r" style="left:866px;top:307px;width:1px;height:51px;background:#bfbfbf;"></div>
<div class="r" style="left:1086px;top:307px;width:1px;height:51px;background:#bfbfbf;"></div>
<div class="r" style="left:1277px;top:307px;width:1px;height:51px;background:#bfbfbf;"></div>
<div class="r" style="left:1450px;top:307px;width:1px;height:51px;background:#bfbfbf;"></div>
<div class="r" style="left:2px;top:358px;width:1556px;height:1px;background:#ababab;"></div>
<div class="r" style="left:72px;top:307px;width:1px;height:644px;background:#ababab;"></div>
<div class="r" style="left:2px;top:410px;width:70px;height:1px;background:#bfbfbf;"></div>
<div class="r" style="left:2px;top:462px;width:70px;height:1px;background:#bfbfbf;"></div>
<div class="r" style="left:2px;top:514px;width:70px;height:1px;background:#bfbfbf;"></div>
<div class="r" style="left:2px;top:566px;width:70px;height:1px;background:#bfbfbf;"></div>
<div class="r" style="left:2px;top:618px;width:70px;height:1px;background:#bfbfbf;"></div>
<div class="r" style="left:2px;top:670px;width:70px;height:1px;background:#bfbfbf;"></div>
<div class="r" style="left:2px;top:722px;width:70px;height:1px;background:#bfbfbf;"></div>
<div class="r" style="left:2px;top:774px;width:70px;height:1px;background:#bfbfbf;"></div>
<div class="r" style="left:2px;top:826px;width:70px;height:1px;background:#bfbfbf;"></div>
<div class="r" style="left:2px;top:878px;width:70px;height:1px;background:#bfbfbf;"></div>
<div class="r" style="left:2px;top:930px;width:70px;height:1px;background:#bfbfbf;"></div>
<div class="t" style="left:-241.5px;width:800px;text-align:center;top:314.66px;font-size:37px;color:#217346;font-weight:400;">A</div>
<div class="t" style="left:-48.0px;width:800px;text-align:center;top:314.66px;font-size:37px;color:#000;font-weight:400;">B</div>
<div class="t" style="left:161.5px;width:800px;text-align:center;top:314.66px;font-size:37px;color:#000;font-weight:400;">C</div>
<div class="t" style="left:365.0px;width:800px;text-align:center;top:314.66px;font-size:37px;color:#000;font-weight:400;">D</div>
<div class="t" style="left:576.0px;width:800px;text-align:center;top:314.66px;font-size:37px;color:#000;font-weight:400;">E</div>
<div class="t" style="left:781.5px;width:800px;text-align:center;top:314.66px;font-size:37px;color:#000;font-weight:400;">F</div>
<div class="t" style="left:963.5px;width:800px;text-align:center;top:314.66px;font-size:37px;color:#000;font-weight:400;">G</div>
<div class="t" style="left:1137px;width:800px;text-align:center;top:314.66px;font-size:37px;color:#000;font-weight:400;">H</div>
<div class="t" style="left:-363px;width:800px;text-align:center;top:367.16px;font-size:37px;color:#217346;font-weight:400;">1</div>
<div class="t" style="left:-363px;width:800px;text-align:center;top:419.16px;font-size:37px;color:#000;font-weight:400;">2</div>
<div class="t" style="left:-363px;width:800px;text-align:center;top:471.16px;font-size:37px;color:#000;font-weight:400;">3</div>
<div class="t" style="left:-363px;width:800px;text-align:center;top:523.16px;font-size:37px;color:#000;font-weight:400;">4</div>
<div class="t" style="left:-363px;width:800px;text-align:center;top:575.16px;font-size:37px;color:#000;font-weight:400;">5</div>
<div class="t" style="left:-363px;width:800px;text-align:center;top:627.16px;font-size:37px;color:#000;font-weight:400;">6</div>
<div class="t" style="left:-363px;width:800px;text-align:center;top:679.16px;font-size:37px;color:#000;font-weight:400;">7</div>
<div class="t" style="left:-363px;width:800px;text-align:center;top:731.16px;font-size:37px;color:#000;font-weight:400;">8</div>
<div class="t" style="left:-363px;width:800px;text-align:center;top:783.16px;font-size:37px;color:#000;font-weight:400;">9</div>
<div class="t" style="left:-363px;width:800px;text-align:center;top:835.16px;font-size:37px;color:#000;font-weight:400;">10</div>
<div class="t" style="left:-363px;width:800px;text-align:center;top:887.16px;font-size:37px;color:#000;font-weight:400;">11</div>
<div class="t" style="left:-363px;width:800px;text-align:center;top:939.16px;font-size:37px;color:#000;font-weight:400;">12</div>
<div class="r" style="left:72px;top:410px;width:1486px;height:1px;background:#d4d4d4;"></div>
<div class="r" style="left:72px;top:462px;width:1486px;height:1px;background:#d4d4d4;"></div>
<div class="r" style="left:72px;top:514px;width:1486px;height:1px;background:#d4d4d4;"></div>
<div class="r" style="left:72px;top:566px;width:1486px;height:1px;background:#d4d4d4;"></div>
<div class="r" style="left:72px;top:618px;width:1486px;height:1px;background:#d4d4d4;"></div>
<div class="r" style="left:72px;top:670px;width:1486px;height:1px;background:#d4d4d4;"></div>
<div class="r" style="left:72px;top:722px;width:1486px;height:1px;background:#d4d4d4;"></div>
<div class="r" style="left:72px;top:774px;width:1486px;height:1px;background:#d4d4d4;"></div>
<div class="r" style="left:72px;top:826px;width:1486px;height:1px;background:#d4d4d4;"></div>
<div class="r" style="left:72px;top:878px;width:1486px;height:1px;background:#d4d4d4;"></div>
<div class="r" style="left:72px;top:930px;width:1486px;height:1px;background:#d4d4d4;"></div>
<div class="r" style="left:245px;top:358px;width:1px;height:593px;background:#d4d4d4;"></div>
<div class="r" style="left:459px;top:358px;width:1px;height:593px;background:#d4d4d4;"></div>
<div class="r" style="left:664px;top:358px;width:1px;height:593px;background:#d4d4d4;"></div>
<div class="r" style="left:866px;top:358px;width:1px;height:593px;background:#d4d4d4;"></div>
<div class="r" style="left:1086px;top:358px;width:1px;height:593px;background:#d4d4d4;"></div>
<div class="r" style="left:1277px;top:358px;width:1px;height:593px;background:#d4d4d4;"></div>
<div class="r" style="left:1450px;top:358px;width:1px;height:593px;background:#d4d4d4;"></div>
<div class="r" style="left:73px;top:358px;width:172px;height:520px;background:#d9d9d9;"></div>
<div class="r" style="left:73px;top:462px;width:172px;height:1px;background:#000;"></div>
<div class="r" style="left:73px;top:514px;width:172px;height:1px;background:#000;"></div>
<div class="r" style="left:73px;top:566px;width:172px;height:1px;background:#000;"></div>
<div class="r" style="left:73px;top:618px;width:172px;height:1px;background:#000;"></div>
<div class="r" style="left:73px;top:670px;width:172px;height:1px;background:#000;"></div>
<div class="r" style="left:73px;top:722px;width:172px;height:1px;background:#000;"></div>
<div class="r" style="left:73px;top:774px;width:172px;height:1px;background:#000;"></div>
<div class="r" style="left:73px;top:826px;width:172px;height:1px;background:#000;"></div>
<div class="r" style="left:73px;top:878px;width:172px;height:1px;background:#000;"></div>
<div class="r" style="left:459px;top:358px;width:205px;height:52px;background:#ffff00;"></div>
<div class="r" style="left:664px;top:358px;width:202px;height:52px;background:#00b0f0;"></div>
<div class="r" style="left:866px;top:358px;width:220px;height:52px;background:#00b050;"></div>
<div class="r" style="left:1086px;top:358px;width:191px;height:52px;background:#d9d9d9;"></div>
<div class="t" style="left:-241.5px;width:800px;text-align:center;top:368.93px;font-size:35.5px;color:#000;font-weight:700;">S/N</div>
<div class="t" style="left:-48.0px;width:800px;text-align:center;top:371.71px;font-size:27.5px;color:#000;font-weight:700;">Gadgets</div>
<div class="t" style="left:161.5px;width:800px;text-align:center;top:371.71px;font-size:27.5px;color:#000;font-weight:700;">Price</div>
<div class="t" style="left:365.0px;width:800px;text-align:center;top:371.71px;font-size:27.5px;color:#000;font-weight:700;">Quantity</div>
<div class="t" style="left:576.0px;width:800px;text-align:center;top:371.71px;font-size:27.5px;color:#000;font-weight:700;">Total</div>
<div class="t" style="left:781.5px;width:800px;text-align:center;top:371.71px;font-size:27.5px;color:#000;font-weight:700;">30%</div>
<div class="t" style="left:-241.5px;width:800px;text-align:center;top:421.13px;font-size:35.5px;color:#000;font-weight:700;">1</div>
<div class="t" style="left:-48.0px;width:800px;text-align:center;top:427.98px;font-size:26px;color:#000;font-weight:400;">Laptop</div>
<div class="t" style="left:161.5px;width:800px;text-align:center;top:427.98px;font-size:26px;color:#000;font-weight:400;">250,000</div>
<div class="t" style="left:365.0px;width:800px;text-align:center;top:427.98px;font-size:26px;color:#000;font-weight:400;">6</div>
<div class="t" style="left:576.0px;width:800px;text-align:center;top:424.58px;font-size:26px;color:#000;font-weight:400;">1500000</div>
<div class="t" style="left:781.5px;width:800px;text-align:center;top:424.58px;font-size:26px;color:#000;font-weight:400;">1050000</div>
<div class="t" style="left:-241.5px;width:800px;text-align:center;top:473.13px;font-size:35.5px;color:#000;font-weight:700;">2</div>
<div class="t" style="left:-48.0px;width:800px;text-align:center;top:479.98px;font-size:26px;color:#000;font-weight:400;">Speaker</div>
<div class="t" style="left:161.5px;width:800px;text-align:center;top:479.98px;font-size:26px;color:#000;font-weight:400;">17,450</div>
<div class="t" style="left:365.0px;width:800px;text-align:center;top:479.98px;font-size:26px;color:#000;font-weight:400;">9</div>
<div class="t" style="left:576.0px;width:800px;text-align:center;top:476.58px;font-size:26px;color:#000;font-weight:400;">157050</div>
<div class="t" style="left:781.5px;width:800px;text-align:center;top:476.58px;font-size:26px;color:#000;font-weight:400;">109935</div>
<div class="t" style="left:-241.5px;width:800px;text-align:center;top:525.13px;font-size:35.5px;color:#000;font-weight:700;">3</div>
<div class="t" style="left:-48.0px;width:800px;text-align:center;top:531.98px;font-size:26px;color:#000;font-weight:400;">Mouse</div>
<div class="t" style="left:161.5px;width:800px;text-align:center;top:531.98px;font-size:26px;color:#000;font-weight:400;">5,500</div>
<div class="t" style="left:365.0px;width:800px;text-align:center;top:531.98px;font-size:26px;color:#000;font-weight:400;">12</div>
<div class="t" style="left:576.0px;width:800px;text-align:center;top:528.58px;font-size:26px;color:#000;font-weight:400;">66000</div>
<div class="t" style="left:781.5px;width:800px;text-align:center;top:528.58px;font-size:26px;color:#000;font-weight:400;">46200</div>
<div class="t" style="left:-241.5px;width:800px;text-align:center;top:577.13px;font-size:35.5px;color:#000;font-weight:700;">4</div>
<div class="t" style="left:-48.0px;width:800px;text-align:center;top:583.98px;font-size:26px;color:#000;font-weight:400;">Microphone</div>
<div class="t" style="left:161.5px;width:800px;text-align:center;top:583.98px;font-size:26px;color:#000;font-weight:400;">25,000</div>
<div class="t" style="left:365.0px;width:800px;text-align:center;top:583.98px;font-size:26px;color:#000;font-weight:400;">9</div>
<div class="t" style="left:576.0px;width:800px;text-align:center;top:580.58px;font-size:26px;color:#000;font-weight:400;">225000</div>
<div class="t" style="left:781.5px;width:800px;text-align:center;top:580.58px;font-size:26px;color:#000;font-weight:400;">157500</div>
<div class="t" style="left:-241.5px;width:800px;text-align:center;top:629.13px;font-size:35.5px;color:#000;font-weight:700;">5</div>
<div class="t" style="left:-48.0px;width:800px;text-align:center;top:635.98px;font-size:26px;color:#000;font-weight:400;">Iphone 13</div>
<div class="t" style="left:161.5px;width:800px;text-align:center;top:635.98px;font-size:26px;color:#000;font-weight:400;">300,000</div>
<div class="t" style="left:365.0px;width:800px;text-align:center;top:635.98px;font-size:26px;color:#000;font-weight:400;">2</div>
<div class="t" style="left:576.0px;width:800px;text-align:center;top:632.58px;font-size:26px;color:#000;font-weight:400;">600000</div>
<div class="t" style="left:781.5px;width:800px;text-align:center;top:632.58px;font-size:26px;color:#000;font-weight:400;">420000</div>
<div class="t" style="left:-241.5px;width:800px;text-align:center;top:681.13px;font-size:35.5px;color:#000;font-weight:700;">6</div>
<div class="t" style="left:-48.0px;width:800px;text-align:center;top:687.98px;font-size:26px;color:#000;font-weight:400;">Airpod</div>
<div class="t" style="left:161.5px;width:800px;text-align:center;top:687.98px;font-size:26px;color:#000;font-weight:400;">15,000</div>
<div class="t" style="left:365.0px;width:800px;text-align:center;top:687.98px;font-size:26px;color:#000;font-weight:400;">1</div>
<div class="t" style="left:576.0px;width:800px;text-align:center;top:684.58px;font-size:26px;color:#000;font-weight:400;">15000</div>
<div class="t" style="left:781.5px;width:800px;text-align:center;top:684.58px;font-size:26px;color:#000;font-weight:400;">10500</div>
<div class="t" style="left:-241.5px;width:800px;text-align:center;top:733.13px;font-size:35.5px;color:#000;font-weight:700;">7</div>
<div class="t" style="left:-48.0px;width:800px;text-align:center;top:739.98px;font-size:26px;color:#000;font-weight:400;">Headset</div>
<div class="t" style="left:161.5px;width:800px;text-align:center;top:739.98px;font-size:26px;color:#000;font-weight:400;">3,500</div>
<div class="t" style="left:365.0px;width:800px;text-align:center;top:739.98px;font-size:26px;color:#000;font-weight:400;">4</div>
<div class="t" style="left:576.0px;width:800px;text-align:center;top:736.58px;font-size:26px;color:#000;font-weight:400;">14000</div>
<div class="t" style="left:781.5px;width:800px;text-align:center;top:736.58px;font-size:26px;color:#000;font-weight:400;">9800</div>
<div class="t" style="left:-241.5px;width:800px;text-align:center;top:785.13px;font-size:35.5px;color:#000;font-weight:700;">8</div>
<div class="t" style="left:-48.0px;width:800px;text-align:center;top:791.98px;font-size:26px;color:#000;font-weight:400;">Moderm</div>
<div class="t" style="left:161.5px;width:800px;text-align:center;top:791.98px;font-size:26px;color:#000;font-weight:400;">17,500</div>
<div class="t" style="left:365.0px;width:800px;text-align:center;top:791.98px;font-size:26px;color:#000;font-weight:400;">6</div>
<div class="t" style="left:576.0px;width:800px;text-align:center;top:788.58px;font-size:26px;color:#000;font-weight:400;">105000</div>
<div class="t" style="left:781.5px;width:800px;text-align:center;top:788.58px;font-size:26px;color:#000;font-weight:400;">73500</div>
<div class="t" style="left:-241.5px;width:800px;text-align:center;top:837.13px;font-size:35.5px;color:#000;font-weight:700;">9</div>
<div class="t" style="left:-48.0px;width:800px;text-align:center;top:843.98px;font-size:26px;color:#000;font-weight:400;">Tecno Spark 2</div>
<div class="t" style="left:161.5px;width:800px;text-align:center;top:843.98px;font-size:26px;color:#000;font-weight:400;">35,000</div>
<div class="t" style="left:365.0px;width:800px;text-align:center;top:843.98px;font-size:26px;color:#000;font-weight:400;">1</div>
<div class="t" style="left:576.0px;width:800px;text-align:center;top:840.58px;font-size:26px;color:#000;font-weight:400;">35000</div>
<div class="t" style="left:781.5px;width:800px;text-align:center;top:840.58px;font-size:26px;color:#000;font-weight:400;">24500</div>
<div class="r" style="left:71px;top:357px;width:176px;height:55px;border:2px solid #217346;box-sizing:border-box;"></div>
<div class="r" style="left:73px;top:359px;width:172px;height:51px;border:1px solid #fff;box-sizing:border-box;"></div>
<div class="r" style="left:241px;top:406px;width:6px;height:6px;background:#217346;border:1px solid #fff;box-sizing:content-box;"></div>
<div class="r" style="left:1557px;top:358px;width:1px;height:594px;background:#9b9b9b;"></div>
<div class="r" style="left:2px;top:951px;width:1556px;height:1px;background:#8a8a8a;"></div>
<div class="r" style="left:1558px;top:307px;width:30px;height:645px;background:#e6e6e6;"></div>
<div class="r" style="left:1561px;top:308px;width:24px;height:644px;background:#d9d9d9;"></div>
<div class="r" style="left:1560px;top:308px;width:25px;height:25px;background:#fff;border:1px solid #7a7a7a;box-sizing:border-box;"></div>
<svg class="r" style="left:1566px;top:316px;" width="13" height="8" viewBox="0 0 13 8"><path d="M0 7 L6.5 0 L13 7 Z" fill="#6d6d6d"/></svg>
<div class="r" style="left:1561px;top:333px;width:23px;height:327px;background:#fff;border:1.5px solid #6d6d6d;box-sizing:border-box;"></div>
<div class="r" style="left:1560px;top:928px;width:25px;height:25px;background:#fff;border:1px solid #7a7a7a;box-sizing:border-box;"></div>
<svg class="r" style="left:1566px;top:937px;" width="13" height="8" viewBox="0 0 13 8"><path d="M0 0 L6.5 7 L13 0 Z" fill="#6d6d6d"/></svg>
<div class="r" style="left:2px;top:952px;width:1586px;height:33px;background:#e6e6e6;"></div>
<div class="r" style="left:2px;top:951px;width:1556px;height:1px;background:#9f9f9f;"></div>
<svg class="r" style="left:30px;top:962px;" width="9" height="13" viewBox="0 0 9 13"><path d="M8 0 V12 L1 6 Z" fill="#c2c2c2"/></svg>
<svg class="r" style="left:65px;top:962px;" width="9" height="13" viewBox="0 0 9 13"><path d="M1 0 V12 L8 6 Z" fill="#c2c2c2"/></svg>
<div class="r" style="left:120px;top:951px;width:89px;height:31px;background:#fff;border-left:1px solid #c6c6c6;border-right:1px solid #c6c6c6;box-sizing:border-box;"></div>
<div class="r" style="left:120px;top:979.5px;width:89px;height:2.2px;background:#217346;"></div>
<div class="t" style="left:-235.5px;width:800px;text-align:center;top:956.99px;font-size:18.9px;color:#217346;font-weight:700;">Sheet1</div>
<svg class="r" style="left:247px;top:956px;" width="24" height="24" viewBox="0 0 24 24"><circle cx="12" cy="12" r="10.8" fill="none" stroke="#7a7a7a" stroke-width="1.3"/><path d="M12 6.5 V17.5 M6.5 12 H17.5" stroke="#7a7a7a" stroke-width="1.5"/></svg>
<div class="r" style="left:950px;top:960px;width:3px;height:3px;background:#a6a6a6;"></div>
<div class="r" style="left:950px;top:966px;width:3px;height:3px;background:#a6a6a6;"></div>
<div class="r" style="left:950px;top:972px;width:3px;height:3px;background:#a6a6a6;"></div>
<div class="r" style="left:995px;top:955px;width:539px;height:25px;background:#d9d9d9;"></div>
<div class="r" style="left:970px;top:955px;width:25px;height:25px;background:#fff;border:1px solid #7a7a7a;box-sizing:border-box;"></div>
<svg class="r" style="left:978px;top:961px;" width="8" height="13" viewBox="0 0 8 13"><path d="M7 0 V12 L0 6 Z" fill="#6d6d6d"/></svg>
<div class="r" style="left:994px;top:955px;width:471px;height:25px;background:#fff;border:1.5px solid #6d6d6d;box-sizing:border-box;"></div>
<div class="r" style="left:1534px;top:955px;width:25px;height:25px;background:#fff;border:1px solid #7a7a7a;box-sizing:border-box;"></div>
<svg class="r" style="left:1544px;top:961px;" width="8" height="13" viewBox="0 0 8 13"><path d="M0 0 V12 L7 6 Z" fill="#6d6d6d"/></svg>
<div class="r" style="left:2px;top:984px;width:1586px;height:1.5px;background:#d2d2d2;"></div>
<div class="r" style="left:1560px;top:928px;width:25px;height:25px;background:#fff;border:1px solid #7a7a7a;box-sizing:border-box;"></div>
<svg class="r" style="left:1566px;top:937px;" width="13" height="8" viewBox="0 0 13 8"><path d="M0 0 L6.5 7 L13 0 Z" fill="#6d6d6d"/></svg>
<div class="r" style="left:2px;top:985px;width:1586px;height:33px;background:#f3f2f1;"></div>
<div class="t" style="left:12px;top:995.72px;font-size:14.5px;color:#484644;font-weight:400;">Ready</div>
<svg class="r" style="left:82px;top:992px;" width="24" height="22" viewBox="0 0 24 22"><path d="M2.2 1.8 H22 V5.5 M2.2 1.8 V18.8 H8" fill="none" stroke="#484644" stroke-width="1.6"/>
<path d="M2.2 4.8 H22" stroke="#484644" stroke-width="1.4"/>
<path d="M5 7.7 H9 M5 10.7 H8 M5 13.6 H7" stroke="#484644" stroke-width="1.4" stroke-linecap="round"/>
<circle cx="15.7" cy="13.6" r="6.2" fill="none" stroke="#484644" stroke-width="1.5"/><circle cx="15.7" cy="13.6" r="2.7" fill="#484644"/></svg>
<svg class="r" style="left:129px;top:990px;" width="26" height="24" viewBox="0 0 26 24"><circle cx="10.4" cy="4.8" r="2.6" fill="none" stroke="#484644" stroke-width="1.4"/>
<path d="M7.5 7.8 C5 7 4 6 3 6.5 C1.5 7.5 2.5 9.5 6.5 10.5 C7 12 7 13 6.5 15 C6 17 4.5 19.5 5.5 21 C6.5 22 8 21.5 8.5 21" fill="none" stroke="#484644" stroke-width="1.4" stroke-linecap="round"/>
<path d="M13.3 7.8 C16 7 17 6 18 6.5 C19.5 7.5 18.5 9.5 14.5 10.5 C14 12 14.2 13 14.2 14" fill="none" stroke="#484644" stroke-width="1.4" stroke-linecap="round"/>
<path d="M7.5 7.8 C9.5 9 11.5 9 13.3 7.8" fill="none" stroke="#484644" stroke-width="1.4"/>
<path d="M11.5 17 L16 21.8 L23.5 14" fill="none" stroke="#484644" stroke-width="1.5"/></svg>
<div class="t" style="left:157px;top:995.04px;font-size:15.3px;color:#484644;font-weight:400;">Accessibility: Good to go</div>
<div class="r" style="left:1127px;top:985px;width:59px;height:33px;background:#d2d2d2;"></div>
<svg class="r" style="left:1145px;top:991px;" width="22" height="22" viewBox="0 0 22 22"><path d="M1.5 1.5 H20.5 V20.5 H1.5 Z M8 1.5 V20.5 M14 1.5 V20.5 M1.5 8 H20.5 M1.5 14 H20.5" fill="none" stroke="#484644" stroke-width="1.4"/></svg>
<svg class="r" style="left:1205px;top:991px;" width="22" height="22" viewBox="0 0 22 22"><rect x="1.5" y="1.5" width="19" height="19" fill="none" stroke="#484644" stroke-width="1.4"/><rect x="5" y="5" width="12" height="12" fill="none" stroke="#484644" stroke-width="1.2"/><path d="M7.5 8.5 H14.5 M7.5 11 H14.5 M7.5 13.5 H14.5" stroke="#484644" stroke-width="1"/></svg>
<svg class="r" style="left:1264px;top:990px;" width="24" height="23" viewBox="0 0 24 23"><path d="M1.5 1.5 H22.5 V21 H1.5 Z" fill="none" stroke="#484644" stroke-width="1.4"/><path d="M1.5 13 H14.6 V1.5 M8 1.5 V13" fill="none" stroke="#484644" stroke-width="1.4"/></svg>
<div class="r" style="left:1315px;top:1001px;width:11px;height:1.5px;background:#605e5c;"></div>
<div class="r" style="left:1335px;top:1001px;width:147px;height:2px;background:#444;"></div>
<div class="r" style="left:1407px;top:996px;width:2px;height:11px;background:#444;"></div>
<div class="r" style="left:1423px;top:993px;width:8px;height:17px;background:#777;"></div>
<svg class="r" style="left:1489px;top:995px;" width="14" height="14" viewBox="0 0 14 14"><path d="M7 1 V13 M1 7 H13" stroke="#605e5c" stroke-width="1.3"/></svg>
<div class="t" style="left:1521px;top:995.13px;font-size:15.2px;color:#605e5c;font-weight:400;">180%</div>
</body></html>
